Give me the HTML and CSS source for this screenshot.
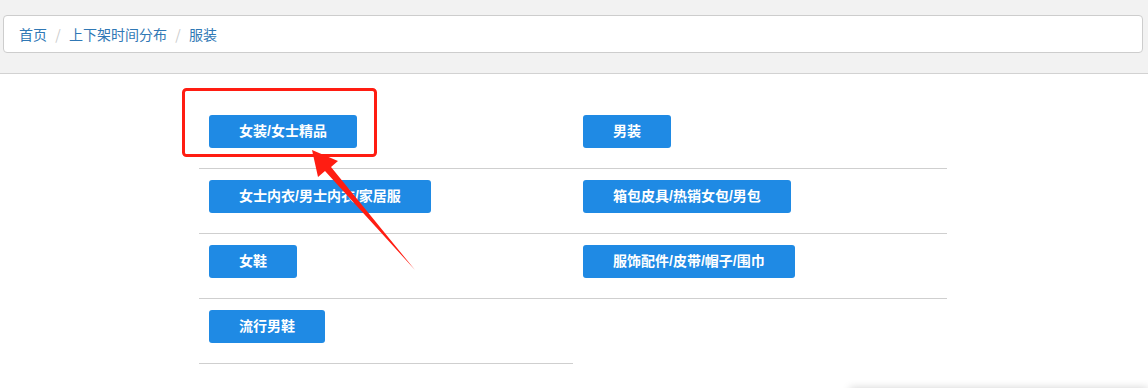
FILE: index.html
```html
<!DOCTYPE html>
<html lang="zh-CN">
<head>
    <meta charset="UTF-8">
    <title>上下架时间分布 - 服装</title>
    <link rel="stylesheet" href="styles.css">
</head>
<body>

    <div class="top">
        <ul class="crumbs">
            <li><a href="#">首页</a></li>
            <li><a href="#">上下架时间分布</a></li>
            <li><a href="#">服装</a></li>
        </ul>
    </div>

    <div class="cats">
        <div class="cell"><a class="btn" href="#">女装/女士精品</a></div>
        <div class="cell"><a class="btn" href="#">男装</a></div>
        <div class="cell"><a class="btn" href="#">女士内衣/男士内衣/家居服</a></div>
        <div class="cell"><a class="btn" href="#">箱包皮具/热销女包/男包</a></div>
        <div class="cell"><a class="btn" href="#">女鞋</a></div>
        <div class="cell"><a class="btn" href="#">服饰配件/皮带/帽子/围巾</a></div>
        <div class="cell"><a class="btn" href="#">流行男鞋</a></div>
    </div>

    <!-- annotation drawn over the page -->
    <svg class="mark" width="1148" height="388" viewBox="0 0 1148 388">
        <rect x="183.5" y="89.5" width="192" height="66" rx="3" fill="none" stroke="#ff1d12" stroke-width="3"/>
        <polygon fill="#ff1d12" points="312,150 338,161 331,167 415,270 325,171 318,177"/>
    </svg>

    <div class="dock"></div>

</body>
</html>
```

FILE: styles.css
```css
* {
    margin: 0;
    padding: 0;
    box-sizing: border-box;
}

body {
    background-color: #fff;
    font-family: "Noto Sans CJK SC", "Liberation Sans", sans-serif;
    font-size: 14px;
    overflow: hidden;
}

a {
    text-decoration: none;
}

.top {
    height: 74px;
    padding: 15px 5px 0 3px;
    background-color: #f2f2f2;
    border-bottom: 1px solid #d2d2d2;
}

.crumbs {
    display: flex;
    align-items: center;
    height: 38px;
    padding: 0 15px;
    list-style: none;
    background-color: #fff;
    border: 1px solid #cdcdcd;
    border-radius: 4px;
}

.crumbs li {
    line-height: 20px;
}

.crumbs li a {
    color: #3078b5;
}

.crumbs li + li::before {
    content: "/";
    display: inline-block;
    width: 22px;
    text-align: center;
    color: #ccc;
}

.cats {
    display: grid;
    grid-template-columns: 374px 374px;
    width: 748px;
    margin: 30px 0 0 199px;
}

.cats .cell {
    height: 65px;
    padding: 11px 10px 0;
    border-bottom: 1px solid #cfcfcf;
}

.cats .btn {
    display: inline-block;
    height: 33px;
    padding: 0 30px;
    line-height: 33px;
    font-family: "Liberation Sans", "Noto Sans CJK SC", sans-serif;
    font-weight: bold;
    color: #fff;
    background-color: #1f8ae4;
    border-radius: 3px;
}

.mark {
    position: absolute;
    top: 0;
    left: 0;
    pointer-events: none;
}

.dock {
    position: fixed;
    top: 388px;
    left: 850px;
    right: 0;
    height: 20px;
    box-shadow: 0 0 8px rgba(0, 0, 0, .18);
}
```
